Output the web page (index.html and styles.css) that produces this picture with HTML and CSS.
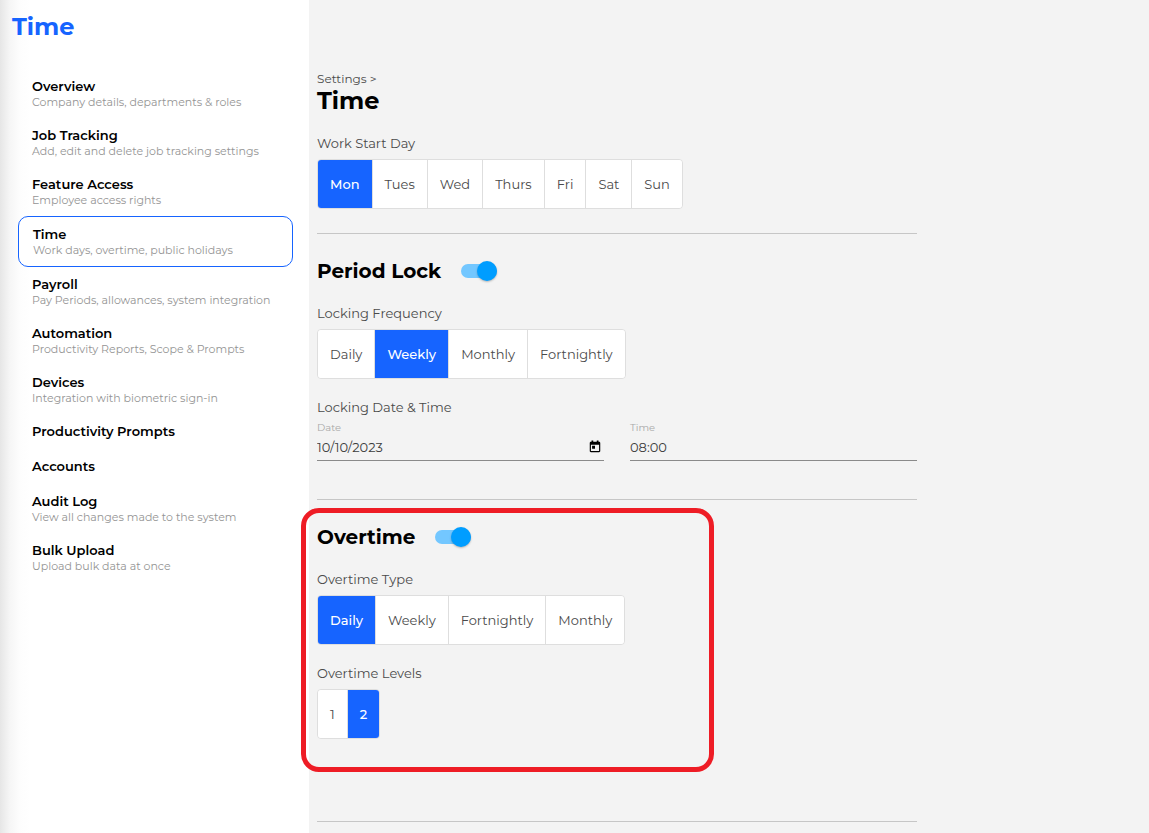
FILE: index.html
```html
<!DOCTYPE html>
<html lang="en">
<head>
  <meta charset="UTF-8">
  <meta name="viewport" content="width=device-width, initial-scale=1">
  <title>Time</title>
  <link rel="stylesheet" href="styles.css">
</head>
<body>

<div class="layout">
  <aside class="sidebar">
    <div class="sidebar-title">Time</div>
    <nav class="menu">
      <a href="#" class="menu-item"><strong>Overview</strong><span>Company details, departments &amp; roles</span></a>
      <a href="#" class="menu-item"><strong>Job Tracking</strong><span>Add, edit and delete job tracking settings</span></a>
      <a href="#" class="menu-item"><strong>Feature Access</strong><span>Employee access rights</span></a>
      <a href="#" class="menu-item active" aria-current="page"><strong>Time</strong><span>Work days, overtime, public holidays</span></a>
      <a href="#" class="menu-item"><strong>Payroll</strong><span>Pay Periods, allowances, system integration</span></a>
      <a href="#" class="menu-item"><strong>Automation</strong><span>Productivity Reports, Scope &amp; Prompts</span></a>
      <a href="#" class="menu-item"><strong>Devices</strong><span>Integration with biometric sign-in</span></a>
      <a href="#" class="menu-item"><strong>Productivity Prompts</strong></a>
      <a href="#" class="menu-item"><strong>Accounts</strong></a>
      <a href="#" class="menu-item"><strong>Audit Log</strong><span>View all changes made to the system</span></a>
      <a href="#" class="menu-item"><strong>Bulk Upload</strong><span>Upload bulk data at once</span></a>
    </nav>
  </aside>

  <main class="content">
    <section class="section">
      <a href="#" class="breadcrumb">Settings &gt;</a>
      <h1>Time</h1>
      <div class="field">
        <div class="field-label" id="startDayLabel">Work Start Day</div>
        <div class="toggle-group" role="group" aria-labelledby="startDayLabel">
          <button type="button" class="selected" aria-pressed="true">Mon</button>
          <button type="button">Tues</button>
          <button type="button">Wed</button>
          <button type="button">Thurs</button>
          <button type="button">Fri</button>
          <button type="button">Sat</button>
          <button type="button">Sun</button>
        </div>
      </div>
    </section>

    <section class="section period-lock">
      <div class="section-header">
        <h2><label for="periodLock">Period Lock</label></h2>
        <input type="checkbox" class="switch" id="periodLock" checked>
      </div>
      <div class="field">
        <div class="field-label" id="frequencyLabel">Locking Frequency</div>
        <div class="toggle-group" role="group" aria-labelledby="frequencyLabel">
          <button type="button">Daily</button>
          <button type="button" class="selected" aria-pressed="true">Weekly</button>
          <button type="button">Monthly</button>
          <button type="button">Fortnightly</button>
        </div>
      </div>
      <div class="field">
        <div class="field-label">Locking Date &amp; Time</div>
        <div class="date-row">
          <div class="text-field">
            <label for="lockDate">Date</label>
            <div class="input-line">
              <input type="text" id="lockDate" value="10/10/2023">
              <button type="button" class="calendar-button" aria-label="Open calendar">
                <svg viewBox="0 0 24 24" width="14" height="14"><path d="M19 3h-1V1h-3v2H9V1H6v2H5c-1.1 0-2 .9-2 2v14c0 1.1.9 2 2 2h14c1.1 0 2-.9 2-2V5c0-1.1-.9-2-2-2zm0 16H5V8h14v11zM7 10h5v5H7z"/></svg>
              </button>
            </div>
          </div>
          <div class="text-field">
            <label for="lockTime">Time</label>
            <div class="input-line">
              <input type="text" id="lockTime" value="08:00">
            </div>
          </div>
        </div>
      </div>
    </section>

    <section class="section overtime">
      <div class="section-header">
        <h2><label for="overtime">Overtime</label></h2>
        <input type="checkbox" class="switch" id="overtime" checked>
      </div>
      <div class="field">
        <div class="field-label" id="typeLabel">Overtime Type</div>
        <div class="toggle-group" role="group" aria-labelledby="typeLabel">
          <button type="button" class="selected" aria-pressed="true">Daily</button>
          <button type="button">Weekly</button>
          <button type="button">Fortnightly</button>
          <button type="button">Monthly</button>
        </div>
      </div>
      <div class="field">
        <div class="field-label" id="levelsLabel">Overtime Levels</div>
        <div class="toggle-group" role="group" aria-labelledby="levelsLabel">
          <button type="button">1</button>
          <button type="button" class="selected" aria-pressed="true">2</button>
        </div>
      </div>
      <div class="highlight"></div>
    </section>
  </main>
</div>

<script>
  // Pick one option per group
  document.querySelectorAll('.toggle-group').forEach(group => {
    group.addEventListener('click', e => {
      const button = e.target.closest('button');
      if (!button) return;
      group.querySelectorAll('button').forEach(b => {
        b.classList.toggle('selected', b === button);
        b.setAttribute('aria-pressed', b === button);
      });
    });
  });
</script>

</body>
</html>
```

FILE: styles.css
```css
* {
  box-sizing: border-box;
}

body {
  margin: 0;
  font-family: Montserrat, Inter, sans-serif;
  font-size: 13px;
  background: #f3f3f3;
  color: #4a4a4a;
}

a {
  color: inherit;
  text-decoration: none;
}

.layout {
  display: flex;
  min-height: 100vh;
}

/* Sidebar */
.sidebar {
  flex: 0 0 309px;
  padding: 12px 16px 12px 18px;
  background: linear-gradient(to right, #e6e6e6, #f6f6f6 10px, #fdfdfd 20px, #fff 30px);
}

.sidebar-title {
  margin: 0 0 27px -6px;
  font-size: 24px;
  line-height: 30px;
  font-weight: 700;
  color: #1664ff;
}

.menu {
  display: flex;
  flex-direction: column;
}

.menu-item {
  display: flex;
  flex-direction: column;
  padding: 9px 14px;
}

.menu-item strong {
  line-height: 17px;
  font-weight: 600;
  color: #000;
}

.menu-item span {
  font-size: 11px;
  line-height: 14px;
  color: #949494;
}

.menu-item.active {
  border: 1px solid #1664ff;
  border-radius: 10px;
  background: #fff;
}

/* Settings */
.content {
  flex: 1;
  padding: 70px 8px 0;
}

.section {
  max-width: 600px;
  padding-bottom: 24px;
  margin-bottom: 25px;
  border-bottom: 1px solid #c6c6c6;
}

.section:last-child {
  margin-bottom: 0;
}

.breadcrumb {
  display: block;
  font-size: 12px;
  line-height: 18px;
}

h1, h2 {
  margin: 0;
  font-weight: 700;
  color: #000;
}

h1 {
  font-size: 24px;
  line-height: 25px;
}

h2 {
  font-size: 20px;
  line-height: 24px;
}

.section-header {
  display: flex;
  align-items: center;
  gap: 20px;
}

.field {
  margin-top: 19px;
}

h1 + .field,
.section-header + .field {
  margin-top: 21px;
}

.field-label {
  margin-bottom: 7px;
  line-height: 18px;
}

.toggle-group {
  display: inline-flex;
  vertical-align: top;
  overflow: hidden;
  border: 1px solid #dedede;
  border-radius: 4px;
}

.toggle-group button {
  height: 48px;
  padding: 0 12px;
  border: none;
  border-left: 1px solid #dedede;
  background: #fff;
  color: #4a4a4a;
  font: inherit;
  cursor: pointer;
}

.toggle-group button:first-child {
  border-left: none;
}

.toggle-group .selected {
  background: #1664ff;
  color: #fff;
  font-weight: 500;
}

.switch {
  appearance: none;
  position: relative;
  width: 36px;
  height: 20px;
  margin: 0;
  cursor: pointer;
}

.switch::before {
  content: '';
  position: absolute;
  inset: 3px 0;
  border-radius: 7px;
  background: #bdbdbd;
}

.switch::after {
  content: '';
  position: absolute;
  top: 0;
  left: 0;
  width: 20px;
  height: 20px;
  border-radius: 50%;
  background: #fff;
  box-shadow: 0 1px 2px rgba(0, 0, 0, 0.25);
}

.switch:checked::before {
  background: #73c7ff;
}

.switch:checked::after {
  left: 16px;
  background: #009dff;
}

.period-lock {
  padding-bottom: 38px;
}

.date-row {
  display: grid;
  grid-template-columns: 1fr 1fr;
  gap: 26px;
}

.text-field {
  display: flex;
  flex-direction: column;
}

.text-field label {
  font-size: 10px;
  line-height: 10px;
  color: #a8a8a8;
}

.input-line {
  display: flex;
  align-items: center;
  height: 28px;
  padding-right: 2px;
  border-bottom: 1px solid #8a8a8a;
}

.input-line input {
  flex: 1;
  min-width: 0;
  padding: 0;
  border: none;
  background: none;
  color: #3c3c3c;
  font: inherit;
}

.calendar-button {
  display: flex;
  padding: 0;
  border: none;
  background: none;
  color: #000;
  cursor: pointer;
}

.overtime {
  position: relative;
  padding-bottom: 82px;
}

/* Marker drawn over the overtime block */
.highlight {
  position: absolute;
  top: -17px;
  left: -16px;
  bottom: 49px;
  width: 413px;
  border: 5px solid #ee1c25;
  border-radius: 18px;
  pointer-events: none;
}
```
